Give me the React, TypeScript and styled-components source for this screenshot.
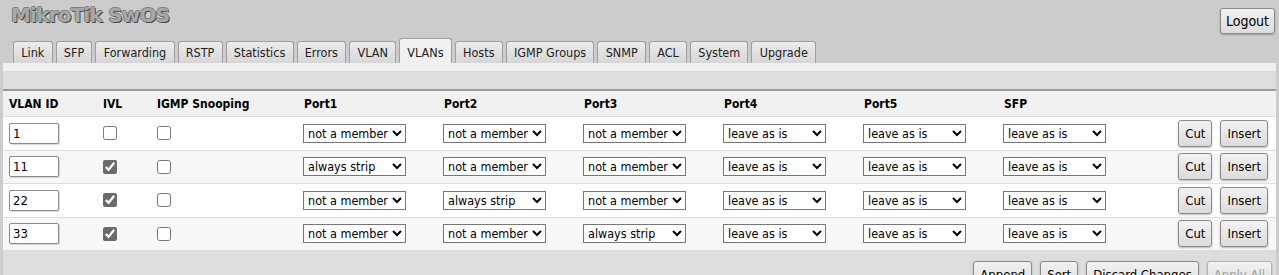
import React from "react"
import styled, { createGlobalStyle } from "styled-components"

const GlobalStyle = createGlobalStyle`
   html, body {
      margin: 0;
      padding: 0;
      background: #cccccc;
   }
   body {
      font-family: "DejaVu Sans Condensed", "DejaVu Sans", Tahoma, sans-serif;
      font-stretch: condensed;
      font-size: 12px;
      color: #000;
   }
`

const Page = styled.div`
   padding: 0 3px;
`

const Header = styled.header`
   display: flex;
   justify-content: space-between;
   align-items: flex-start;
   height: 38px;
`

const Title = styled.h1`
   margin: 3px 0 0 8px;
   font-family: "DejaVu Sans", Verdana, sans-serif;
   font-stretch: normal;
   font-size: 20px;
   font-weight: bold;
   letter-spacing: -0.8px;
   color: #a8a8a8;
   text-shadow: 1px 1px 0 #4a4a4a, -1px 0 0 #808080, 0 -1px 0 #808080;
`

const Button = styled.button<{ disabled?: boolean }>`
   font-family: inherit;
   font-stretch: condensed;
   font-size: 13px;
   padding: 0 6px;
   height: 27px;
   border: 1px solid ${p => (p.disabled ? "#b5b5b5" : "#8a8a8a")};
   border-radius: 3px;
   background: linear-gradient(#f2f2f2, #dcdcdc);
   color: ${p => (p.disabled ? "#a0a0a0" : "#000")};
   box-shadow: 0 1px 2px rgba(0, 0, 0, 0.25);
`

const LogoutButton = styled(Button)`
   margin: 8px 1px 0 0;
   font-size: 14px;
   height: 26px;
   padding: 0 5px;
`

const Tabs = styled.nav`
   display: flex;
   align-items: flex-end;
   gap: 3px;
   padding-left: 10px;
   height: 25px;
`

const Tab = styled.div<{ active?: boolean }>`
   display: flex;
   align-items: center;
   padding: 0 7.25px;
   height: ${p => (p.active ? "25px" : "22px")};
   padding-top: ${p => (p.active ? "3px" : "0")};
   box-sizing: border-box;
   font-size: 12.5px;
   border: 1px solid #a0a0a0;
   border-bottom: none;
   border-radius: 3px 3px 0 0;
   background: ${p => (p.active ? "#f0f0f0" : "linear-gradient(#ececec, #d6d6d6)")};
   color: #222;
`

const Strip = styled.div`
   height: 8px;
   background: #f0f0f0;
`

const Toolbar = styled.div`
   height: 18px;
   background: #dddddd;
   border-bottom: 2px solid #9a9a9a;
`

const Grid = styled.div`
   display: grid;
   grid-template-columns: 94px 54px 147px repeat(6, 140px) 1fr;
   align-items: center;
   padding-left: 6px;
   padding-right: 8px;
   box-sizing: border-box;
`

const HeadRow = styled(Grid)`
   height: 26px;
   background: #f1f1f1;
   font-weight: bold;
   border-bottom: 1px solid #dddddd;
`

const Row = styled(Grid)<{ alt?: boolean }>`
   height: 33.5px;
   background: ${p => (p.alt ? "#f7f7f7" : "#ffffff")};
   border-bottom: 1px solid #dddddd;
   box-sizing: border-box;
`

const Cell = styled.div`
   display: flex;
   align-items: center;
`

const IdInput = styled.input`
   width: 50px;
   height: 21px;
   box-sizing: border-box;
   font-family: inherit;
   font-stretch: condensed;
   font-size: 13px;
   padding: 0 3px;
   border: 1px solid #8a8a8a;
   border-radius: 2px;
   box-shadow: 1px 1px 1px rgba(0, 0, 0, 0.15);
`

const Check = styled.input`
   margin: 0;
   width: 14px;
   height: 14px;
   accent-color: #6b6b6b;
`

const Select = styled.select`
   width: 103px;
   height: 19px;
   margin-left: -1px;
   box-sizing: border-box;
   font-family: inherit;
   font-stretch: condensed;
   font-size: 12.5px;
   border: 1px solid #767676;
   border-radius: 0;
   background: #fff;
   color: #000;
   padding: 0;
`

const Actions = styled.div`
   display: flex;
   justify-content: flex-end;
   gap: 8px;
`

const Footer = styled.div`
   display: flex;
   justify-content: flex-end;
   gap: 8px;
   padding: 10px 4px 0 0;
   height: 40px;
   background: #dddddd;
`

const portOptions = ["leave as is", "always strip", "add if missing", "not a member"]

const vlans = [
   { id: "1", ivl: false, igmp: false, ports: ["not a member", "not a member", "not a member", "leave as is", "leave as is", "leave as is"] },
   { id: "11", ivl: true, igmp: false, ports: ["always strip", "not a member", "not a member", "leave as is", "leave as is", "leave as is"] },
   { id: "22", ivl: true, igmp: false, ports: ["not a member", "always strip", "not a member", "leave as is", "leave as is", "leave as is"] },
   { id: "33", ivl: true, igmp: false, ports: ["not a member", "not a member", "always strip", "leave as is", "leave as is", "leave as is"] },
]

const tabs = ["Link", "SFP", "Forwarding", "RSTP", "Statistics", "Errors", "VLAN", "VLANs", "Hosts", "IGMP Groups", "SNMP", "ACL", "System", "Upgrade"]

const App: React.FC = () => {
   return (
      <Page>
         <GlobalStyle />
         <Header>
            <Title>MikroTik SwOS</Title>
            <LogoutButton>Logout</LogoutButton>
         </Header>
         <Tabs>
            {tabs.map(t => (
               <Tab key={t} active={t === "VLANs"}>{t}</Tab>
            ))}
         </Tabs>
         <Strip />
         <Toolbar />
         <HeadRow>
            <span>VLAN ID</span>
            <span>IVL</span>
            <span>IGMP Snooping</span>
            {["Port1", "Port2", "Port3", "Port4", "Port5", "SFP"].map(p => (
               <span key={p}>{p}</span>
            ))}
            <span />
         </HeadRow>
         {vlans.map((v, i) => (
            <Row key={v.id} alt={i % 2 === 1}>
               <Cell><IdInput defaultValue={v.id} /></Cell>
               <Cell><Check type="checkbox" defaultChecked={v.ivl} /></Cell>
               <Cell><Check type="checkbox" defaultChecked={v.igmp} /></Cell>
               {v.ports.map((p, j) => (
                  <Cell key={j}>
                     <Select defaultValue={p}>
                        {portOptions.map(o => (
                           <option key={o}>{o}</option>
                        ))}
                     </Select>
                  </Cell>
               ))}
               <Actions>
                  <Button>Cut</Button>
                  <Button>Insert</Button>
               </Actions>
            </Row>
         ))}
         <Footer>
            <Button>Append</Button>
            <Button>Sort</Button>
            <Button>Discard Changes</Button>
            <Button disabled>Apply All</Button>
         </Footer>
      </Page>
   )
}

export default App
